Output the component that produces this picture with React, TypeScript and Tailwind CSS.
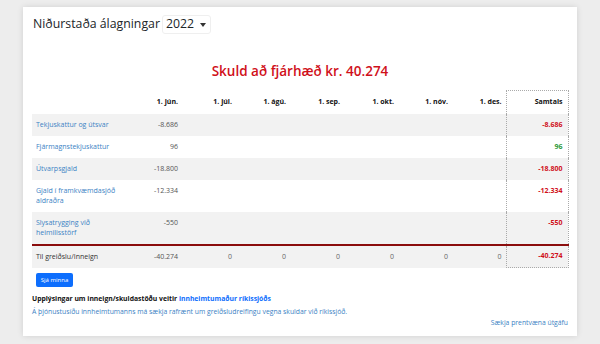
type Row = { label: string[]; jun: string; total: string; positive?: boolean; shaded: boolean }

const rows: Row[] = [
  { label: ['Tekjuskattur og útsvar'], jun: '-8.686', total: '-8.686', shaded: true },
  { label: ['Fjármagnstekjuskattur'], jun: '96', total: '96', positive: true, shaded: false },
  { label: ['Útvarpsgjald'], jun: '-18.800', total: '-18.800', shaded: true },
  { label: ['Gjald í framkvæmdasjóð', 'aldraðra'], jun: '-12.334', total: '-12.334', shaded: false },
  { label: ['Slysatrygging við', 'heimilisstörf'], jun: '-550', total: '-550', shaded: true },
]

const months = ['1. jún.', '1. júl.', '1. ágú.', '1. sep.', '1. okt.', '1. nóv.', '1. des.']

export default function App() {
  return (
    <div
      className="w-[600px] h-[344px] bg-[#ededed] pt-[7px] px-[23px] overflow-hidden"
      style={{ fontFamily: '"Open Sans", "Noto Sans", sans-serif' }}
    >
      <div className="bg-white h-[329px] shadow-[0_0_6px_rgba(0,0,0,0.12)] pl-[9px] pr-[9px] pt-[8px]">
        <div className="flex items-center gap-[2px] text-[12.3px] text-[#212529] h-[19px]">
          <span className="pl-[1px]">Niðurstaða álagningar</span>
          <div className="flex items-center gap-[6px] border border-[#efefef] rounded-[3px] h-[19px] pl-[3px] pr-[4px] text-[12.3px]">
            2022
            <svg width="6" height="4" viewBox="0 0 6 4">
              <path d="M0 0h6L3 4z" fill="#333" />
            </svg>
          </div>
        </div>

        <h1 className="text-center text-[#d0101a] text-[13.5px] font-semibold mt-[25px] h-[24px] leading-[24px]">
          Skuld að fjárhæð kr. 40.274
        </h1>

        <table className="mt-[7px] w-[536px] table-fixed border-collapse text-[7px] leading-[10px]">
          <colgroup>
            <col className="w-[96px]" />
            {months.map(m => (
              <col key={m} className="w-[54px]" />
            ))}
            <col className="w-[62px]" />
          </colgroup>
          <thead>
            <tr className="h-[23px] font-bold text-[#111]">
              <th></th>
              {months.map(m => (
                <th key={m} className="text-right pr-[4px]">{m}</th>
              ))}
              <th className="text-right pr-[5px] border border-dotted border-[#aaa] border-b-0">Samtals</th>
            </tr>
          </thead>
          <tbody>
            {rows.map(r => (
              <tr key={r.label[0]} className={r.shaded ? 'bg-[#f2f2f2]' : 'bg-white'}>
                <td className="pl-[4px] py-[6px] text-[#3b82c4] align-top">
                  {r.label.map(l => (
                    <div key={l}>{l}</div>
                  ))}
                </td>
                <td className="text-right pr-[4px] py-[6px] text-[#555] align-top">{r.jun}</td>
                {months.slice(1).map(m => (
                  <td key={m}></td>
                ))}
                <td
                  className={`text-right pr-[5px] py-[6px] font-bold align-top border-x border-dotted border-[#aaa] ${
                    r.positive ? 'text-[#2e9a3a]' : 'text-[#d0101a]'
                  }`}
                >
                  {r.total}
                </td>
              </tr>
            ))}
            <tr className="bg-[#f2f2f2] border-t-2 border-[#8b0d0d] h-[23px]">
              <td className="pl-[4px] text-[#333]">Til greiðslu/Inneign</td>
              <td className="text-right pr-[4px] text-[#555]">-40.274</td>
              {months.slice(1).map(m => (
                <td key={m} className="text-right pr-[4px] text-[#666]">0</td>
              ))}
              <td className="text-right pr-[5px] font-bold text-[#d0101a] border border-dotted border-[#aaa] border-t-0">
                -40.274
              </td>
            </tr>
          </tbody>
        </table>

        <button className="block mt-[5px] ml-[4px] bg-[#0d6efd] text-white text-[6px] rounded-[2px] h-[14px] w-[37px]">
          Sjá minna
        </button>

        <div className="mt-[6px] text-[6.8px] font-bold text-[#111] leading-[12px]">
          Upplýsingar um inneign/skuldastöðu veitir{' '}
          <a className="text-[#0d6efd]">innheimtumaður ríkissjóðs</a>
        </div>
        <div className="mt-[1px] text-[6.8px] text-[#3b82c4] leading-[11px]">
          Á þjónustusíðu innheimtumanns má sækja rafrænt um greiðsludreifingu vegna skuldar við ríkissjóð.
        </div>
        <div className="text-right text-[6.8px] text-[#3b82c4] leading-[11px]">
          Sækja prentvæna útgáfu
        </div>
      </div>
    </div>
  )
}
